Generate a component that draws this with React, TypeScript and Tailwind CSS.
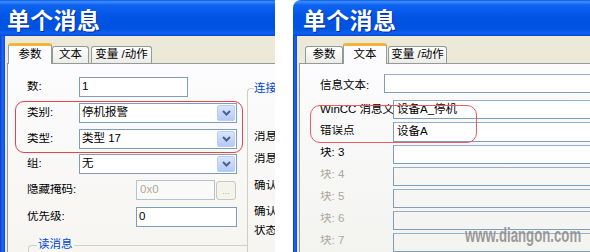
import React from "react";

const FONT = "font-['Liberation_Sans','Noto_Sans_CJK_SC',sans-serif]";

function Chevron() {
  return (
    <svg width="9" height="6" viewBox="0 0 9 6">
      <path d="M1 1 L4.5 4.5 L8 1" fill="none" stroke="#4D6185" strokeWidth="2" />
    </svg>
  );
}

function Combo({ value }: { value: string }) {
  return (
    <div className="w-[158px] h-[20px] border border-[#7F9DB9] bg-white flex items-center">
      <span className="flex-1 pl-[2px] text-[11.5px] leading-none text-black">{value}</span>
      <div className="w-[18px] h-[16px] mr-[1px] rounded-[2px] bg-[linear-gradient(#D9E5FD,#B4C9F7)] border border-[#B9CDF8] flex items-center justify-center">
        <Chevron />
      </div>
    </div>
  );
}

function TitleBar({ pad }: { pad: string }) {
  return (
    <div
      className={
        "h-[36px] shrink-0 flex items-center pt-[3px] bg-[linear-gradient(180deg,#0A5AE8_0%,#3E8DFA_5%,#0E63F0_14%,#0055E5_45%,#0052E0_80%,#0B63F2_92%,#0945D0_100%)] " +
        pad
      }
    >
      <span className="text-white text-[23px] font-bold leading-none tracking-[0.3px] [text-shadow:1px_1px_0_#0A2E9A] font-['Noto_Sans_CJK_SC',sans-serif]">
        单个消息
      </span>
    </div>
  );
}

function ActiveTab({ label, w }: { label: string; w: string }) {
  return (
    <div
      className={
        "relative z-10 -mb-px h-[21px] rounded-t-[3px] border-x border-t-[3px] border-x-[#919B9C] border-t-[#F3B43A] bg-[#FCFCFE] flex items-center justify-center text-[11.5px] leading-none text-black " +
        w
      }
    >
      {label}
    </div>
  );
}

function Tab({ label, w }: { label: string; w: string }) {
  return (
    <div
      className={
        "h-[17px] rounded-t-[3px] border border-b-0 border-[#919B9C] bg-[linear-gradient(#FFFFFF,#ECEBE6)] flex items-center justify-center text-[11.5px] leading-none text-black " +
        w
      }
    >
      {label}
    </div>
  );
}

function Label({ text, w, grey }: { text: string; w: string; grey?: boolean }) {
  return (
    <div
      className={
        "shrink-0 whitespace-nowrap overflow-hidden text-[11.5px] leading-none " +
        (grey ? "text-[#ACA899] " : "text-black ") +
        w
      }
    >
      {text}
    </div>
  );
}

function LeftWindow() {
  return (
    <div className="w-[275px] h-[252px] shrink-0 flex flex-col overflow-hidden">
      <TitleBar pad="pl-[7px]" />
      <div className="flex flex-1 min-h-0">
        <div className="w-[5px] shrink-0 bg-[linear-gradient(90deg,#0A3FD0,#1E66F0,#0B4DDB)]" />
        <div className="flex-1 flex flex-col bg-[#ECE9D8] min-w-0">
          <div className="h-[27px] shrink-0 flex items-end pl-[3px]">
            <ActiveTab label="参数" w="w-[44px]" />
            <Tab label="文本" w="w-[37px]" />
            <Tab label="变量 /动作" w="w-[61px] ml-[2px]" />
          </div>
          <div className="flex-1 ml-[2px] border-t border-l border-[#919B9C] bg-[linear-gradient(#FCFCFE,#F6F5F1)] flex overflow-hidden">
            {/* form column */}
            <div className="w-[239px] shrink-0 pl-[19px] pt-[13px] flex flex-col">
              <div className="h-[20px] flex items-center">
                <Label text="数:" w="w-[52px]" />
                <div className="w-[109px] h-[20px] border border-[#7F9DB9] bg-white flex items-center pl-[2px] text-[11.5px] leading-none">1</div>
              </div>
              <div className="h-[20px] mt-[6px] flex items-center">
                <Label text="类别:" w="w-[52px]" />
                <Combo value="停机报警" />
              </div>
              <div className="h-[20px] mt-[6px] flex items-center">
                <Label text="类型:" w="w-[52px]" />
                <Combo value="类型 17" />
              </div>
              <div className="h-[20px] mt-[5px] flex items-center">
                <Label text="组:" w="w-[52px]" />
                <Combo value="无" />
              </div>
              <div className="h-[20px] mt-[6px] flex items-center">
                <Label text="隐藏掩码:" w="w-[109px]" />
                <div className="w-[79px] h-[20px] border border-[#B5C2D3] bg-[#FAFAF9] flex items-center pl-[3px] text-[11.5px] leading-none text-[#ACA899]">0x0</div>
                <div className="w-[20px] h-[19px] ml-[1px] rounded-[3px] border border-[#CAC8BB] bg-[#F5F4EC] flex items-end justify-center pb-[3px] text-[9px] leading-none text-[#ACA899]">...</div>
              </div>
              <div className="h-[20px] mt-[7px] flex items-center">
                <Label text="优先级:" w="w-[109px]" />
                <div className="w-[101px] h-[20px] border border-[#7F9DB9] bg-white flex items-center pl-[2px] text-[11.5px] leading-none">0</div>
              </div>
              <div className="relative mt-[18px] ml-[1px] h-[20px] border-t border-l rounded-tl-[4px] border-[#D0D0BF]">
                <span className="absolute -top-[7px] left-[8px] px-[1px] bg-[#F7F6F3] text-[11.5px] leading-none text-[#0046D5]">读消息</span>
              </div>
            </div>
            {/* connection group */}
            <div className="flex-1 pt-[24px]">
              <div className="relative h-[200px] w-[40px] border-t border-l rounded-tl-[4px] border-[#D0D0BF] pl-[6px] flex flex-col">
                <span className="absolute -top-[6px] left-[6px] pr-[2px] bg-[#FBFBFC] text-[11.5px] leading-none text-[#0046D5] whitespace-nowrap">连接</span>
                <Label text="消息" w="mt-[42px] w-[30px]" />
                <Label text="消息" w="mt-[10px] w-[30px]" />
                <Label text="确认" w="mt-[16px] w-[30px]" />
                <Label text="确认" w="mt-[14px] w-[30px]" />
                <Label text="状态" w="mt-[8px] w-[30px]" />
              </div>
            </div>
          </div>
        </div>
      </div>
    </div>
  );
}

function RInput({ value, w, disabled }: { value?: string; w: string; disabled?: boolean }) {
  return (
    <div
      className={
        "h-[19px] shrink-0 border border-[#7F9DB9] border-t-[#95AECB] flex items-center pl-[3px] text-[11.5px] leading-none text-black whitespace-nowrap " +
        (disabled ? "bg-transparent " : "bg-white ") +
        w
      }
    >
      {value}
    </div>
  );
}

function RightWindow() {
  return (
    <div className="w-[297px] h-[252px] shrink-0 flex flex-col overflow-hidden rounded-tl-[8px]">
      <TitleBar pad="pl-[10px]" />
      <div className="flex flex-1 min-h-0">
        <div className="w-[4px] shrink-0 bg-[linear-gradient(90deg,#0831D9,#1E66F0,#0B4DDB)]" />
        <div className="flex-1 flex flex-col bg-[#ECE9D8] min-w-0">
          <div className="h-[27px] shrink-0 flex items-end pl-[8px]">
            <Tab label="参数" w="w-[38px]" />
            <ActiveTab label="文本" w="w-[44px]" />
            <Tab label="变量 /动作" w="w-[59px] ml-[1px]" />
          </div>
          <div className="flex-1 ml-[2px] border-t border-l border-[#919B9C] bg-[linear-gradient(#FCFCFE,#F3F3F0)] overflow-hidden pl-[20px] pt-[10px] flex flex-col">
            <div className="h-[19px] flex items-center">
              <Label text="信息文本:" w="w-[64px] pt-[5px]" />
              <RInput w="w-[260px]" />
            </div>
            <div className="h-[19px] mt-[7px] flex items-center">
              <Label text="WinCC 消息文" w="w-[73px]" />
              <RInput value="设备A_停机" w="w-[260px]" />
            </div>
            <div className="h-[20px] mt-[3px] flex items-center">
              <Label text="错误点" w="w-[73px] -mt-[2px]" />
              <RInput value="设备A" w="w-[260px] h-[20px]" />
            </div>
            <div className="h-[19px] mt-[3px] flex items-center">
              <Label text="块: 3" w="w-[73px] -mt-[3px]" />
              <RInput w="w-[260px]" />
            </div>
            <div className="h-[19px] mt-[3px] flex items-center">
              <Label text="块: 4" w="w-[73px] -mt-[3px]" grey />
              <RInput w="w-[260px]" disabled />
            </div>
            <div className="h-[19px] mt-[3px] flex items-center">
              <Label text="块: 5" w="w-[73px] -mt-[3px]" grey />
              <RInput w="w-[260px]" disabled />
            </div>
            <div className="h-[19px] mt-[3px] flex items-center">
              <Label text="块: 6" w="w-[73px] -mt-[3px]" grey />
              <RInput w="w-[260px]" disabled />
            </div>
            <div className="h-[19px] mt-[3px] flex items-center">
              <Label text="块: 7" w="w-[73px] -mt-[3px]" grey />
              <RInput w="w-[260px]" disabled />
            </div>
          </div>
        </div>
      </div>
    </div>
  );
}

export default function App() {
  return (
    <div className={"relative w-[590px] h-[252px] bg-white flex overflow-hidden " + FONT}>
      <LeftWindow />
      <div className="w-[18px] shrink-0 bg-white" />
      <RightWindow />
      {/* red highlight overlays */}
      <div className="absolute left-[15px] top-[101px] w-[228px] h-[52px] rounded-[9px] border-[1.5px] border-[#E8424A] pointer-events-none" />
      <div className="absolute left-[310px] top-[105px] w-[167px] h-[38px] rounded-[10px] border-[1.5px] border-[#EE5A61] pointer-events-none" />
      {/* watermark */}
      <div className="absolute left-[465px] top-[225px] origin-left scale-x-[0.66] text-[20px] font-bold leading-none text-[#8A8A8A] opacity-85 whitespace-nowrap font-['Liberation_Sans',sans-serif] [text-shadow:0_0_2px_#FFFFFF] pointer-events-none">
        www.diangon.com
      </div>
    </div>
  );
}
